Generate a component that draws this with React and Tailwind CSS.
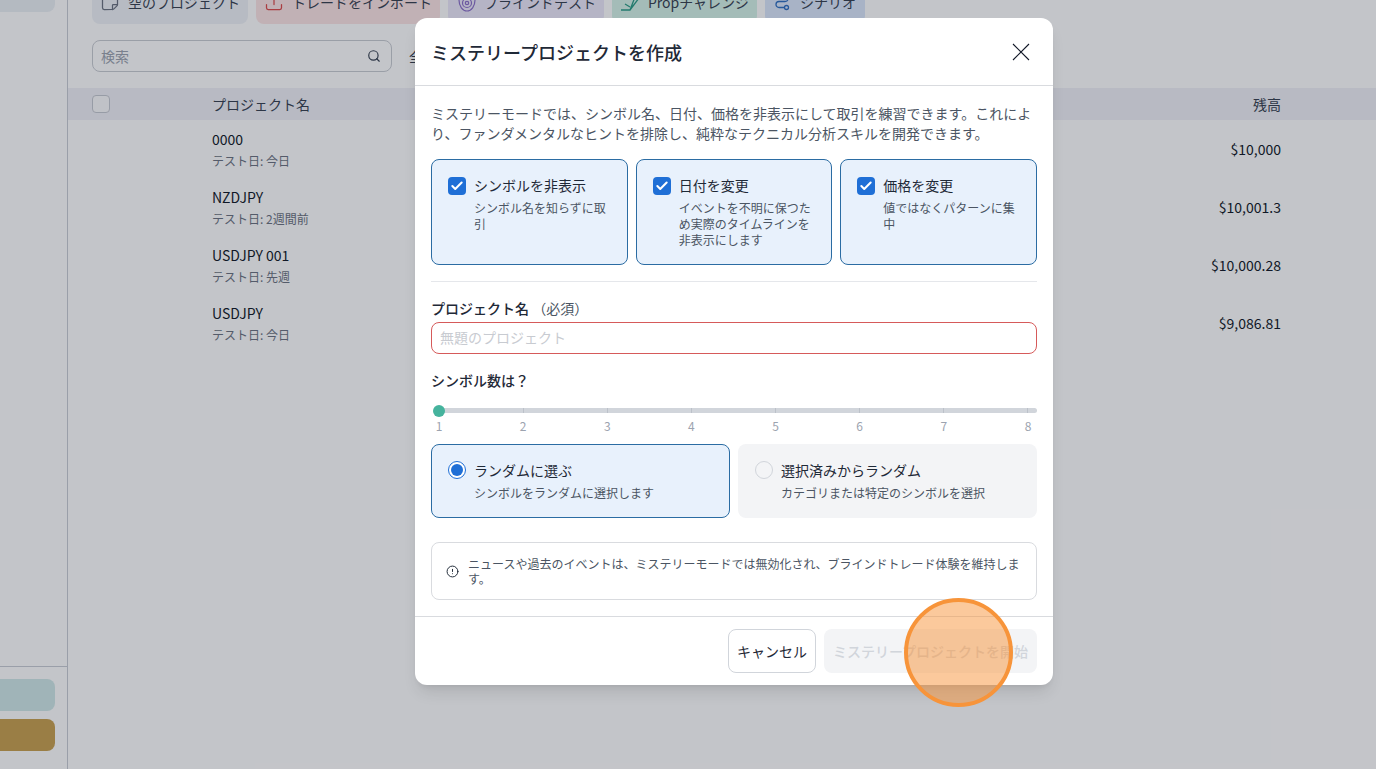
import React from "react";
import { Search, Check, StickyNote, Upload, AlertCircle } from "lucide-react";

const FONT = "font-['Noto_Sans_CJK_JP','Noto_Sans',sans-serif]";

function TopButton({ className, icon, label }) {
  return (
    <div className={`h-11 rounded-lg flex items-center justify-center gap-2 text-sm text-[#374151] ${className}`}>
      {icon}
      <span>{label}</span>
    </div>
  );
}

function Row({ name, date, balance }) {
  return (
    <div className="h-[58px] flex items-center pl-[144px] pr-[95px] justify-between">
      <div className="flex flex-col pt-[2px]">
        <span className="text-sm leading-5 text-[#111827]">{name}</span>
        <span className="text-xs leading-5 mt-[2px] text-[#6b7280]">{date}</span>
      </div>
      <span className="text-sm text-[#111827]">{balance}</span>
    </div>
  );
}

function OptionCard({ title, lines }) {
  return (
    <div className="h-[106px] rounded-lg border border-[#2b6ca3] bg-[#e8f1fc] pl-4 pt-[15px] pr-3 flex gap-2">
      <div className="w-[18px] h-[18px] mt-[2px] rounded-[4px] bg-[#1f6fd6] flex items-center justify-center shrink-0">
        <Check size={14} strokeWidth={3.5} className="text-white" />
      </div>
      <div className="min-w-0">
        <div className="text-sm leading-5 text-[#1f2937]">{title}</div>
        <div className="text-xs leading-4 mt-[5px] text-[#4b5563]">{lines}</div>
      </div>
    </div>
  );
}

const ticks = [1, 2, 3, 4, 5, 6, 7, 8];

export default function App() {
  return (
    <div className={`relative w-[1376px] h-[769px] overflow-hidden bg-white flex ${FONT}`}>
      {/* sidebar */}
      <aside className="w-[68px] shrink-0 border-r border-[#c9cdd4] flex flex-col h-full">
        <div className="h-3 w-[55px] rounded-br-lg bg-[#ebf0f5] shrink-0" />
        <div className="flex-1" />
        <div className="border-t border-[#c9cdd4] pt-3 pb-[18px] flex flex-col gap-2">
          <div className="h-8 w-[55px] rounded-r-lg bg-[#d0e9e8]" />
          <div className="h-8 w-[55px] rounded-r-lg bg-[#c9a14f]" />
        </div>
      </aside>

      {/* page */}
      <main className="flex-1 min-w-0 -mt-5">
        <div className="pl-6 flex gap-2">
          <TopButton className="w-[156px] bg-[#eff2f7]" label="空のプロジェクト" icon={<StickyNote size={20} strokeWidth={1.5} className="text-[#6b7280] -scale-y-100" />} />
          <TopButton className="w-[184px] bg-[#fde4e4]" label="トレードをインポート" icon={<Upload size={20} strokeWidth={1.5} className="text-[#dc4a4a]" />} />
          <TopButton className="w-[156px] bg-[#ede9fa]" label="ブラインドテスト" icon={
            <svg width="20" height="20" viewBox="0 0 20 20" fill="none" stroke="#8b6fc9" strokeWidth="1.2"><ellipse cx="11" cy="8" rx="8" ry="11"/><circle cx="11" cy="11" r="4.5"/><circle cx="11" cy="11" r="1.7"/></svg>
          } />
          <TopButton className="w-[145px] bg-[#d6f3e8]" label="Propチャレンジ" icon={
            <svg width="20" height="20" viewBox="0 0 20 20" fill="none" stroke="#2b9d86" strokeWidth="1.3"><path d="M1 18h9l5-13M5 12l5 3M10 18L19 6" /></svg>
          } />
          <TopButton className="w-[100px] bg-[#dbe7fb]" label="シナリオ" icon={
            <svg width="18" height="20" viewBox="0 0 18 20" fill="none" stroke="#2f6fc2" strokeWidth="1.3"><circle cx="12.5" cy="15.5" r="2"/><path d="M10 15.5H5a3 3 0 0 1 0-6h6a3 3 0 0 0 0-6H6"/></svg>
          } />
        </div>

        <div className="pl-6 mt-4 flex items-center">
          <div className="w-[300px] h-8 rounded-lg border border-[#c9ccd2] flex items-center justify-between pl-2 pr-[10px]">
            <span className="text-sm text-[#9ca3af]">検索</span>
            <Search size={14} strokeWidth={2} className="text-[#374151]" />
          </div>
          <span className="ml-[17px] text-sm text-[#374151]">全</span>
        </div>

        <div className="mt-4 h-8 bg-[#f0f1f7] flex items-center pl-6 pr-[95px]">
          <div className="w-[18px] h-[18px] rounded-[4px] border border-[#c5c8d0] bg-[#fbfbfc]" />
          <span className="ml-[102px] text-sm text-[#374151]">プロジェクト名</span>
          <span className="ml-auto text-sm text-[#374151]">残高</span>
        </div>

        <Row name="0000" date="テスト日: 今日" balance="$10,000" />
        <Row name="NZDJPY" date="テスト日: 2週間前" balance="$10,001.3" />
        <Row name="USDJPY 001" date="テスト日: 先週" balance="$10,000.28" />
        <Row name="USDJPY" date="テスト日: 今日" balance="$9,086.81" />
      </main>

      {/* overlay */}
      <div className="absolute inset-0 bg-[#111827]/25 flex justify-center items-start pt-[18px] pl-[92px]">
        <div className="w-[638px] h-[667px] bg-white rounded-xl shadow-lg flex flex-col">
          <header className="h-[68px] shrink-0 border-b border-[#d9dbdf] flex items-center justify-between pl-4 pr-[23px]">
            <h2 className="text-lg font-medium text-[#1f2937]">ミステリープロジェクトを作成</h2>
            <svg width="18" height="18" viewBox="0 0 18 18" fill="none" stroke="#111827" strokeWidth="1.1">
              <path d="M1 1l16 16M17 1L1 17" />
            </svg>
          </header>

          <div className="flex-1 px-4 pt-[17px] min-h-0">
            <p className="text-sm leading-5 text-[#4b5563]">
              ミステリーモードでは、シンボル名、日付、価格を非表示にして取引を練習できます。これにより、ファンダメンタルなヒントを排除し、純粋なテクニカル分析スキルを開発できます。
            </p>

            <div className="mt-4 grid grid-cols-3 gap-2">
              <OptionCard title="シンボルを非表示" lines="シンボル名を知らずに取引" />
              <OptionCard title="日付を変更" lines="イベントを不明に保つため実際のタイムラインを非表示にします" />
              <OptionCard title="価格を変更" lines="値ではなくパターンに集中" />
            </div>

            <div className="mt-4 border-t border-[#e5e7eb]" />

            <div className="mt-4 text-sm leading-5 font-medium text-[#1f2937]">
              プロジェクト名 <span className="font-normal text-[#4b5563]">（必須）</span>
            </div>
            <div className="mt-1 h-8 rounded-lg border border-[#d65a5a] flex items-center pl-2">
              <span className="text-sm leading-5 -mt-[2px] text-[#c8cbd1]">無題のプロジェクト</span>
            </div>

            <div className="mt-4 text-sm leading-5 font-medium text-[#1f2937]">シンボル数は？</div>

            <div className="relative mt-[18px]">
              <div className="ml-2 h-[5px] rounded-full bg-[#d1d5db] flex justify-between pr-[9px]">
                {ticks.map((t) => (
                  <div key={t} className="w-px h-[5px] bg-[#bcc1c9]" />
                ))}
              </div>
              <div className="absolute left-[2px] -top-[3.5px] w-3 h-3 rounded-full bg-[#45b39d]" />
              <div className="mt-[5px] flex justify-between pr-px">
                {ticks.map((t) => (
                  <span key={t} className="w-4 text-center text-xs leading-4 text-[#9ca3af]">{t}</span>
                ))}
              </div>
            </div>

            <div className="mt-[10px] grid grid-cols-2 gap-2">
              <div className="h-[74px] rounded-lg border border-[#2b6ca3] bg-[#e8f1fc] pl-4 pt-[15px] flex gap-2">
                <div className="w-[18px] h-[18px] mt-px rounded-full border border-[#1f6fd6] bg-white flex items-center justify-center shrink-0">
                  <div className="w-3 h-3 rounded-full bg-[#1f6fd6]" />
                </div>
                <div>
                  <div className="text-sm leading-5 text-[#1f2937]">ランダムに選ぶ</div>
                  <div className="text-xs leading-4 mt-[5px] text-[#4b5563]">シンボルをランダムに選択します</div>
                </div>
              </div>
              <div className="h-[74px] rounded-lg bg-[#f3f4f6] pl-[17px] pt-4 flex gap-2">
                <div className="w-[18px] h-[18px] mt-px rounded-full border border-[#d1d5db] bg-[#f3f4f6] shrink-0" />
                <div>
                  <div className="text-sm leading-5 text-[#1f2937]">選択済みからランダム</div>
                  <div className="text-xs leading-4 mt-[5px] text-[#4b5563]">カテゴリまたは特定のシンボルを選択</div>
                </div>
              </div>
            </div>

            <div className="mt-6 h-[58px] rounded-lg border border-[#d9dbdf] flex items-center pl-[14px] pr-3 gap-[9px]">
              <AlertCircle size={13} strokeWidth={1.8} className="text-[#1f2937] shrink-0" />
              <p className="text-xs leading-[15px] text-[#4b5563]">
                ニュースや過去のイベントは、ミステリーモードでは無効化され、ブラインドトレード体験を維持します。
              </p>
            </div>
          </div>

          <footer className="h-[69px] shrink-0 border-t border-[#d9dbdf] flex items-start justify-end gap-2 pt-3 pr-4">
            <div className="w-[88px] h-11 rounded-lg border border-[#d1d5db] flex items-center justify-center text-sm text-[#1f2937]">キャンセル</div>
            <div className="w-[213px] h-11 rounded-lg bg-[#f3f4f6] flex items-center justify-center text-sm font-medium text-[#d1d5db]">ミステリープロジェクトを開始</div>
          </footer>
        </div>
      </div>

      {/* click marker */}
      <div className="absolute left-[904px] top-[598px] w-[109px] h-[109px] rounded-full border-4 border-[#f7943a] bg-[#f7943a]/50" />
    </div>
  );
}
